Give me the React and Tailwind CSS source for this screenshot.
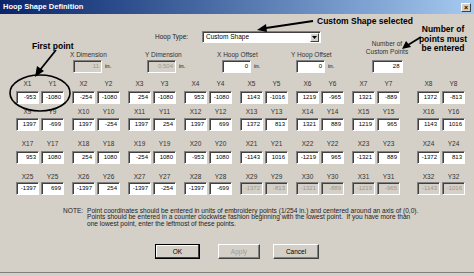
const font = { fontFamily: '"Liberation Sans", Arial, sans-serif' }

const rows = [
  [[-953, -1080], [-254, -1080], [254, -1080], [953, -1080], [1143, -1016], [1219, -965], [1321, -889], [1372, -813]],
  [[1397, -699], [1397, -254], [1397, 254], [1397, 699], [1372, 813], [1321, 889], [1219, 965], [1143, 1016]],
  [[953, 1080], [254, 1080], [-254, 1080], [-953, 1080], [-1143, 1016], [-1219, 965], [-1321, 889], [-1372, 813]],
  [[-1397, 699], [-1397, 254], [-1397, -254], [-1397, -699], [-1372, -813], [-1321, -889], [-1219, -965], [-1143, -1016]],
]

const rowSpacing = [
  { row: 'mt-[0px]', input: 'mt-[3px]' },
  { row: 'mt-[3px]', input: 'mt-[2px]' },
  { row: 'mt-[8px]', input: 'mt-[3px]' },
  { row: 'mt-[8px]', input: 'mt-[1px]' },
]

function Field({ value, disabled, className = '' }) {
  return (
    <div
      className={`h-[13px] flex items-center justify-end pr-[2px] text-[6px] border-t border-l border-[#808080] border-b border-r border-b-white border-r-white shadow-[inset_1px_1px_0_#404040] ${
        disabled ? 'bg-[#d4d0c8] text-[#9a968e]' : 'bg-white text-black'
      } ${className}`}
    >
      {value}
    </div>
  )
}

function Button({ label, w, isDefault, disabled }) {
  return (
    <div
      className={`h-[15px] flex items-center justify-center text-[6.5px] bg-[#d4d0c8] ${w} ${
        isDefault
          ? 'border border-black shadow-[inset_-1px_-1px_0_#404040,inset_1px_1px_0_#fff]'
          : 'border-t border-l border-white border-b border-r border-b-[#404040] border-r-[#404040] shadow-[inset_-1px_-1px_0_#808080]'
      } ${disabled ? 'text-[#a09c94]' : 'text-black'}`}
    >
      {label}
    </div>
  )
}

function PointRow({ points, start, spacing, disabledFrom = 8 }) {
  return (
    <div className={`flex ml-[16px] ${spacing.row}`}>
      {points.map(([x, y], i) => {
        const n = start + i
        const dis = i >= disabledFrom
        return (
          <div key={n} className={`flex gap-[2px] ${i === 7 ? 'ml-[17px]' : i > 0 ? 'ml-[8px]' : ''}`}>
            <div className="flex flex-col w-[23px]">
              <div className="h-[9px] leading-[9px] text-[6.5px] text-center text-[#333]">X{n}</div>
              <Field value={x} disabled={dis} className={spacing.input} />
            </div>
            <div className="flex flex-col w-[23px]">
              <div className="h-[9px] leading-[9px] text-[6.5px] text-center text-[#333]">Y{n}</div>
              <Field value={y} disabled={dis} className={spacing.input} />
            </div>
          </div>
        )
      })}
    </div>
  )
}

function HeaderCol({ label, value, w, inputMl, disabled }) {
  return (
    <div className={`flex flex-col ${w}`}>
      <div className="h-[8px] leading-[8px] text-[6.5px] text-[#333] whitespace-nowrap">{label}</div>
      <div className={`flex items-end mt-[1px] ${inputMl}`}>
        <Field value={value} disabled={disabled} className="w-[29px]" />
        <span className="text-[6px] ml-[3px] mb-[2px]">in.</span>
      </div>
    </div>
  )
}

export default function App() {
  return (
    <div className="relative w-[474px] h-[276px] bg-[#d4d0c8] overflow-hidden" style={font}>
      {/* title bar */}
      <div className="h-[14px] flex items-center justify-between pl-[3px] pr-[3px] bg-gradient-to-r from-[#0a246a] to-[#a6caf0]">
        <span className="text-white font-bold text-[7.5px]">Hoop Shape Definition</span>
        <div className="w-[10px] h-[9px] flex items-center justify-center bg-[#d4d0c8] border-t border-l border-white border-b border-r border-b-[#404040] border-r-[#404040] text-[7px] leading-none text-black font-bold">
          ×
        </div>
      </div>

      {/* hoop type */}
      <div className="flex items-center mt-[17px] ml-[155px]">
        <span className="text-[6.5px] text-[#222] w-[47px]">Hoop Type:</span>
        <div className="w-[119px] h-[12px] flex items-center justify-between bg-white border-t border-l border-[#808080] border-b border-r border-b-white border-r-white shadow-[inset_1px_1px_0_#404040]">
          <span className="text-[6.5px] pl-[3px]">Custom Shape</span>
          <div className="w-[9px] h-[9px] mr-[1px] flex items-center justify-center bg-[#d4d0c8] border-t border-l border-white border-b border-r border-b-[#404040] border-r-[#404040]">
            <svg width="5" height="3" viewBox="0 0 5 3"><path d="M0 0h5L2.5 3z" fill="#000" /></svg>
          </div>
        </div>
      </div>

      {/* dimensions row */}
      <div className="flex items-end mt-[-3px] ml-[70px]">
        <HeaderCol label="X Dimension" value="11" w="w-[75px]" inputMl="ml-[3px]" disabled />
        <HeaderCol label="Y Dimension" value="0.504" w="w-[72px]" inputMl="ml-[2px]" disabled />
        <HeaderCol label="X Hoop Offset" value="0" w="w-[74px]" inputMl="ml-[5px]" />
        <HeaderCol label="Y Hoop Offset" value="0" w="w-[75px]" inputMl="ml-[5px]" />
        <div className="flex flex-col items-center w-[42px]">
          <div className="text-[6.5px] leading-[8px] text-center text-[#333] whitespace-nowrap">
            Number of
            <br />
            Custom Points
          </div>
          <Field value="28" className="w-[31px] mt-[4px]" />
        </div>
      </div>

      {/* points grid */}
      <div className="mt-[6px]">
        <PointRow points={rows[0]} start={1} spacing={rowSpacing[0]} />
        <PointRow points={rows[1]} start={9} spacing={rowSpacing[1]} />
        <PointRow points={rows[2]} start={17} spacing={rowSpacing[2]} />
        <PointRow points={rows[3]} start={25} spacing={rowSpacing[3]} disabledFrom={4} />
      </div>

      {/* note */}
      <div className="flex mt-[13px] ml-[63px] text-[6.6px] leading-[6.3px] text-[#222] whitespace-nowrap">
        <span className="w-[24px]">NOTE:</span>
        <div>
          Point coordinates should be entered in units of embroidery points (1/254 in.) and centered around an axis of (0,0).
          <br />
          Points should be entered in a counter clockwise fashion beginning with the lowest point.&nbsp; If you have more than
          <br />
          one lowest point, enter the leftmost of these points.
        </div>
      </div>

      {/* buttons */}
      <div className="flex mt-[17px] ml-[155px]">
        <Button label="OK" w="w-[45px]" isDefault />
        <div className="ml-[18px]">
          <Button label="Apply" w="w-[42px]" disabled />
        </div>
        <div className="ml-[13px]">
          <Button label="Cancel" w="w-[46px]" />
        </div>
      </div>

      <div className="absolute left-0 right-0 top-[272px] h-px bg-[#808080]" />

      {/* annotations */}
      <div className="absolute left-[32px] top-[40px] text-[8.5px] font-bold text-black">First point</div>
      <div className="absolute left-[317px] top-[15px] text-[8.5px] font-bold text-black">Custom Shape selected</div>
      <div className="absolute left-[418px] top-[25px] w-[50px] text-center text-[8.5px] leading-[9.5px] font-bold text-black">
        Number of
        <br />
        points must
        <br />
        be entered
      </div>
      <svg className="absolute inset-0 pointer-events-none" width="474" height="276">
        <ellipse cx="40" cy="93" rx="30" ry="18" fill="none" stroke="#000" strokeWidth="1.6" />
        <line x1="56" y1="50" x2="40" y2="70" stroke="#000" strokeWidth="1.8" />
        <path d="M35 77 L37 66 L44 71 Z" fill="#000" />
        <line x1="313" y1="21" x2="266" y2="28" stroke="#000" strokeWidth="1.8" />
        <path d="M257 30 L266 24 L267 32 Z" fill="#000" />
        <line x1="421" y1="37" x2="408" y2="45" stroke="#000" strokeWidth="1.8" />
        <path d="M402 49 L406 41 L411 47 Z" fill="#000" />
      </svg>
    </div>
  )
}
